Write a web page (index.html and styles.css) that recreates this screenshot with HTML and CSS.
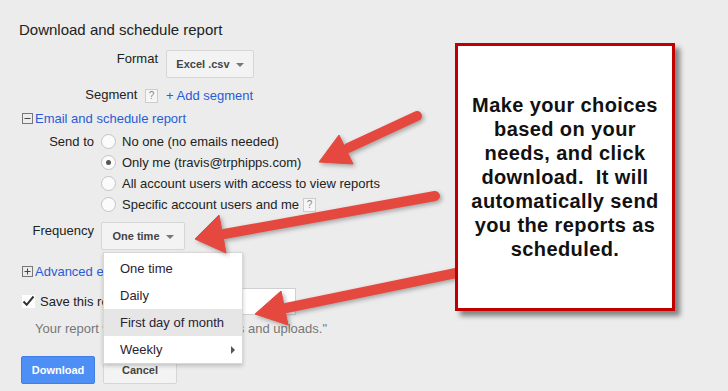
FILE: index.html
```html
<!DOCTYPE html>
<html lang="en">
<head>
  <meta charset="UTF-8" />
  <title>Download and schedule report</title>
  <link rel="stylesheet" href="styles.css">
</head>
<body>
  <div class="page">
    <h1 class="title">Download and schedule report</h1>

    <!-- Format / Segment -->
    <div class="row fmt-row">
      <div class="label wide">Format</div>
      <button class="btn select">Excel .csv <span class="caret"></span></button>
    </div>
    <div class="row seg-row">
      <div class="label wide">Segment <span class="help">?</span></div>
      <a class="link">+ Add segment</a>
    </div>

    <!-- Email section -->
    <div class="toggle email-row">
      <svg class="box-icon" width="11" height="11" viewBox="0 0 11 11"><rect x="0.5" y="0.5" width="10" height="10" fill="none" stroke="#777"/><path d="M2.5 5.5h6" stroke="#444"/></svg>
      <a class="link">Email and schedule report</a>
    </div>

    <div class="send-to">
      <div class="label narrow">Send to</div>
      <div class="radios">
        <div class="radio-row"><span class="radio"></span>No one (no emails needed)</div>
        <div class="radio-row"><span class="radio on"></span>Only me (travis@trphipps.com)</div>
        <div class="radio-row"><span class="radio"></span>All account users with access to view reports</div>
        <div class="radio-row"><span class="radio"></span>Specific account users and me <span class="help">?</span></div>
      </div>
    </div>

    <div class="row freq-row">
      <div class="label narrow">Frequency</div>
      <div class="freq-wrap">
        <button class="btn select">One time <span class="caret"></span></button>
        <ul class="menu">
          <li>One time</li>
          <li>Daily</li>
          <li class="hover">First day of month</li>
          <li>Weekly <span class="sub-caret"></span></li>
        </ul>
      </div>
    </div>

    <div class="toggle adv-row">
      <svg class="box-icon" width="11" height="11" viewBox="0 0 11 11"><rect x="0.5" y="0.5" width="10" height="10" fill="none" stroke="#777"/><path d="M2.5 5.5h6M5.5 2.5v6" stroke="#444"/></svg>
      <a class="link">Advanced email options</a>
    </div>

    <div class="save-row">
      <span class="check">
        <svg width="13" height="12" viewBox="0 0 13 12"><path d="M1.5 6.5l3.2 3.3L11.5 1.5" fill="none" stroke="#333" stroke-width="2"/></svg>
      </span>
      <span>Save this report as</span>
      <input class="name-input" type="text" />
    </div>
    <div class="note">Your report will be saved in "Reports and uploads."</div>

    <div class="actions">
      <button class="btn primary">Download</button>
      <button class="btn">Cancel</button>
    </div>

    <!-- annotation arrows -->
    <svg class="arrows" width="728" height="391" viewBox="0 0 728 391">
      <g fill="#e5483f" stroke="#e5483f">
        <line x1="417" y1="116" x2="348" y2="148" stroke-width="10" stroke-linecap="round"/>
        <polygon points="319,162 353,164 339,135" stroke-width="1"/>
        <line x1="435" y1="196" x2="224" y2="234" stroke-width="10" stroke-linecap="round"/>
        <polygon points="195,239 226,253 219,215" stroke-width="1"/>
        <line x1="456" y1="273" x2="286" y2="308" stroke-width="10" stroke-linecap="round"/>
        <polygon points="255,314 288,325 281,291" stroke-width="1"/>
      </g>
    </svg>

    <div class="callout">
      <p>Make your choices<br>based on your<br>needs, and click<br>download.&nbsp; It will<br>automatically send<br>you the reports as<br>scheduled.</p>
    </div>
  </div>
</body>
</html>
```

FILE: styles.css
```css
body {
  margin: 0;
  background: #ececec;
  font-family: "Liberation Sans", Arial, sans-serif;
  font-size: 13px;
  color: #222;
}

.page {
  position: relative;
  height: 391px;
  box-sizing: border-box;
  padding: 21px 0 0 19px;
  overflow: hidden;
}

.title {
  margin: 0;
  font-size: 15px;
  font-weight: normal;
  line-height: 17px;
  color: #222;
}

.row {
  display: flex;
  align-items: flex-start;
}

.label {
  text-align: right;
  flex: none;
  line-height: 15px;
}

.label.wide {
  width: 139px;
  margin-right: 8px;
}

.label.narrow {
  width: 75px;
  margin-right: 7px;
}

.link {
  color: #2a5bd7;
  cursor: pointer;
}

.help {
  display: inline-block;
  width: 11px;
  height: 12px;
  border: 1px solid #ccc;
  background: #f6f6f6;
  color: #888;
  font-size: 10px;
  line-height: 12px;
  text-align: center;
  vertical-align: middle;
  margin-left: 4px;
}

.btn {
  height: 28px;
  padding: 0;
  border: 1px solid #d6d6d6;
  border-radius: 2px;
  background: #f3f3f3;
  color: #444;
  font-family: inherit;
  font-size: 11px;
  font-weight: bold;
  white-space: nowrap;
  cursor: pointer;
}

.caret {
  display: inline-block;
  width: 0;
  height: 0;
  margin-left: 3px;
  border-left: 4px solid transparent;
  border-right: 4px solid transparent;
  border-top: 4px solid #777;
  vertical-align: middle;
}

/* format / segment */
.fmt-row {
  margin-top: 12px;
}

.fmt-row .label {
  padding-top: 1px;
}

.fmt-row .btn {
  width: 88px;
}

.seg-row {
  margin-top: 9px;
  align-items: center;
  height: 16px;
}

/* collapsible headers */
.toggle {
  display: flex;
  align-items: center;
  margin-left: 3px;
  height: 18px;
}

.box-icon {
  margin-right: 2px;
}

.email-row {
  margin-top: 6px;
}

.adv-row {
  margin-top: 12px;
}

/* send to */
.send-to {
  display: flex;
  margin-top: 4px;
}

.send-to .label {
  line-height: 21px;
}

.radio-row {
  display: flex;
  align-items: center;
  height: 21px;
}

.radio {
  width: 13px;
  height: 13px;
  border: 1px solid #c4c4c4;
  border-radius: 50%;
  background: #fbfbfb;
  margin-right: 6px;
  position: relative;
}

.radio.on::after {
  content: "";
  position: absolute;
  left: 4px;
  top: 4px;
  width: 5px;
  height: 5px;
  border-radius: 50%;
  background: #555;
}

/* frequency */
.freq-row {
  margin-top: 7px;
}

.freq-row .label {
  padding-top: 1px;
}

.freq-wrap {
  position: relative;
}

.freq-wrap .btn {
  width: 84px;
}

.menu {
  position: absolute;
  left: 2px;
  top: 30px;
  z-index: 2;
  width: 138px;
  margin: 0;
  padding: 2px 0 0;
  list-style: none;
  background: #fff;
  border: 1px solid #d8d8d8;
  box-shadow: 0 2px 4px rgba(0, 0, 0, 0.2);
}

.menu li {
  position: relative;
  height: 27px;
  line-height: 27px;
  padding-left: 16px;
  color: #2b2233;
}

.menu li.hover {
  background: #e6e6e6;
}

.sub-caret {
  position: absolute;
  right: 7px;
  top: 10px;
  border-top: 4px solid transparent;
  border-bottom: 4px solid transparent;
  border-left: 4px solid #555;
}

/* save */
.save-row {
  display: flex;
  align-items: center;
  margin-top: 7px;
  margin-left: 3px;
  height: 28px;
}

.check {
  display: inline-flex;
  width: 13px;
  height: 13px;
  background: #fff;
  margin-right: 5px;
}

.name-input {
  margin-left: 8px;
  width: 140px;
  height: 27px;
  box-sizing: border-box;
  border: 1px solid #d0d0d0;
  background: #fff;
}

.note {
  margin: 5px 0 0 16px;
  color: #777;
  line-height: 18px;
}

.actions {
  display: flex;
  gap: 8px;
  margin: 18px 0 0 2px;
}

.actions .btn {
  width: 74px;
}

.btn.primary {
  background: #4d8ff5;
  border-color: #3f7fe6;
  color: #fff;
}

/* annotations */
.arrows {
  position: absolute;
  left: 0;
  top: 0;
  z-index: 3;
  filter: drop-shadow(2px 2px 2px rgba(0, 0, 0, 0.3));
}

.callout {
  position: absolute;
  left: 455px;
  top: 43px;
  z-index: 4;
  width: 220px;
  height: 268px;
  box-sizing: border-box;
  border: 3px solid #c00000;
  background: #fff;
  box-shadow: 5px 5px 5px rgba(0, 0, 0, 0.45);
  display: flex;
  align-items: center;
  justify-content: center;
}

.callout p {
  margin: 0;
  text-align: center;
  font-size: 20px;
  font-weight: bold;
  line-height: 24px;
  letter-spacing: 0.4px;
  color: #111;
}
```
